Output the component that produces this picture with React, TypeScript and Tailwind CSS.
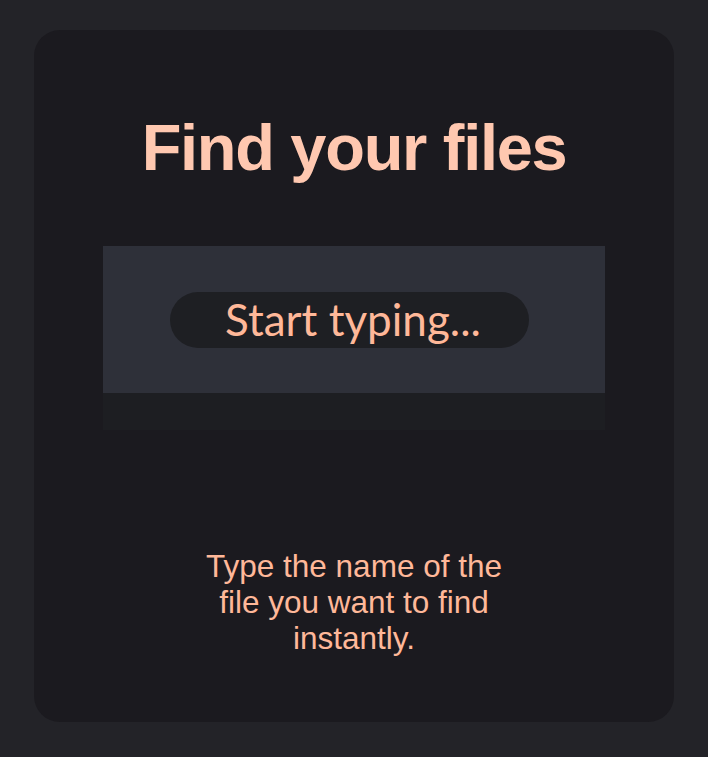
import React from "react";

export default function App() {
  return (
    <div className="min-h-[757px] w-full bg-[#232328] pt-[30px] pb-[35px] px-[34px]">
      <div className="w-[640px] h-[692px] rounded-[26px] bg-[#1b1a1f] pt-[85px] flex flex-col items-center">
        <h1
          className="text-[65px] leading-[65px] font-bold tracking-[-0.02em] text-[#ffc8b0] text-center"
          style={{ fontFamily: '"Liberation Sans", Arial, sans-serif' }}
        >
          Find your files
        </h1>
        <div className="mt-[66px] w-[502px] flex flex-col">
          <div className="h-[147px] bg-[#2e3039] flex items-center">
            <div className="ml-[67px] w-[359px] h-[56px] rounded-full bg-[#1e1f23] flex items-center justify-center pl-[7px]">
              <span
                className="text-[44px] leading-none text-[#ffb899] -mt-[2px]"
                style={{ fontFamily: 'Lato, "Noto Sans", sans-serif' }}
              >
                Start typing...
              </span>
            </div>
          </div>
          <div className="h-[37px] bg-[#1d1e22]" />
        </div>
        <p
          className="mt-[118px] w-[310px] text-[31.5px] leading-[36px] text-center text-[#ffb899]"
          style={{ fontFamily: '"Liberation Sans", Arial, sans-serif' }}
        >
          Type the name of the file you want to find instantly.
        </p>
      </div>
    </div>
  );
}
